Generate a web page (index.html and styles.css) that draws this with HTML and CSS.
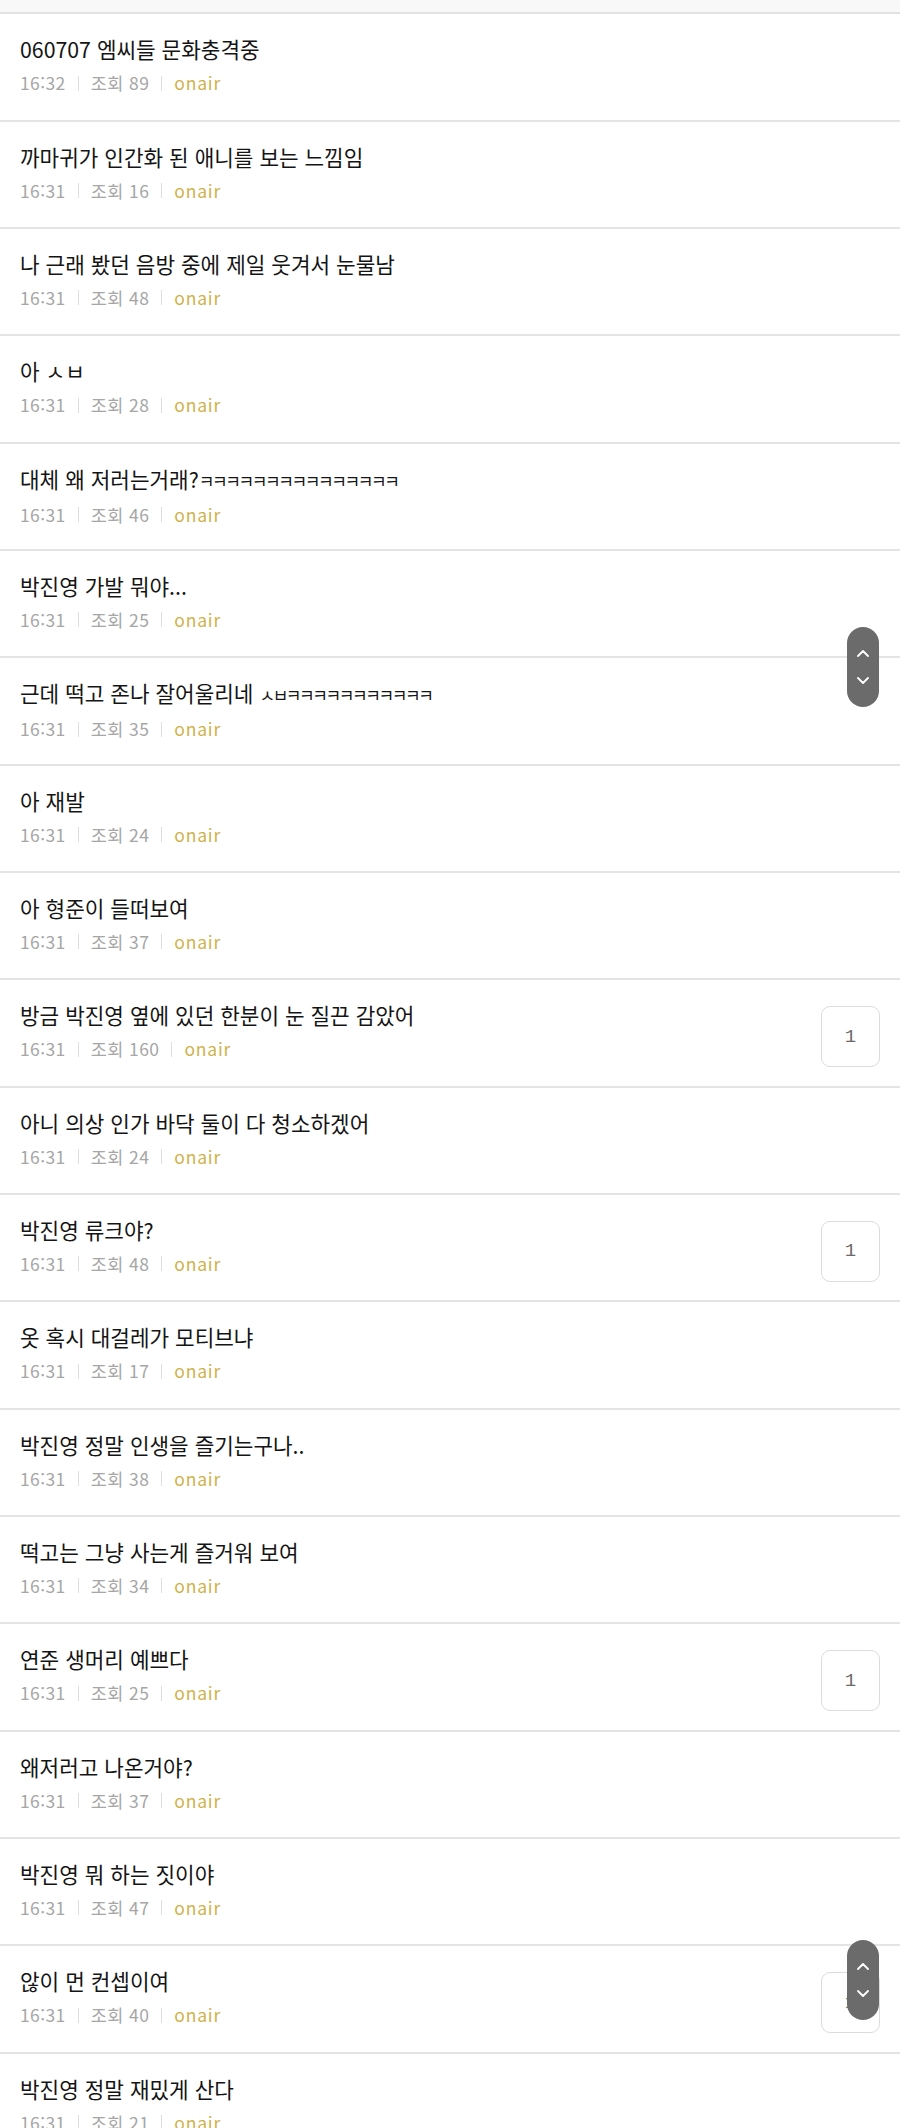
FILE: index.html
```html
<!DOCTYPE html>
<html lang="ko">
<head>
<meta charset="utf-8">
<title>onair</title>
<link rel="stylesheet" href="styles.css">
</head>
<body>
<div class="topbar"></div>
<ul class="list">
  <li class="row"><div class="main"><div class="title">060707 엠씨들 문화충격중</div><div class="meta"><span>16:32</span><span class="sep"></span><span>조회 89</span><span class="sep"></span><span class="board">onair</span></div></div></li>
  <li class="row"><div class="main"><div class="title">까마귀가 인간화 된 애니를 보는 느낌임</div><div class="meta"><span>16:31</span><span class="sep"></span><span>조회 16</span><span class="sep"></span><span class="board">onair</span></div></div></li>
  <li class="row"><div class="main"><div class="title">나 근래 봤던 음방 중에 제일 웃겨서 눈물남</div><div class="meta"><span>16:31</span><span class="sep"></span><span>조회 48</span><span class="sep"></span><span class="board">onair</span></div></div></li>
  <li class="row"><div class="main"><div class="title">아 ㅅㅂ</div><div class="meta"><span>16:31</span><span class="sep"></span><span>조회 28</span><span class="sep"></span><span class="board">onair</span></div></div></li>
  <li class="row"><div class="main"><div class="title">대체 왜 저러는거래?<span class="jamo">ㅋㅋㅋㅋㅋㅋㅋㅋㅋㅋㅋㅋㅋㅋㅋ</span></div><div class="meta"><span>16:31</span><span class="sep"></span><span>조회 46</span><span class="sep"></span><span class="board">onair</span></div></div></li>
  <li class="row"><div class="main"><div class="title">박진영 가발 뭐야...</div><div class="meta"><span>16:31</span><span class="sep"></span><span>조회 25</span><span class="sep"></span><span class="board">onair</span></div></div></li>
  <li class="row"><div class="main"><div class="title">근데 떡고 존나 잘어울리네 <span class="jamo">ㅅㅂㅋㅋㅋㅋㅋㅋㅋㅋㅋㅋㅋ</span></div><div class="meta"><span>16:31</span><span class="sep"></span><span>조회 35</span><span class="sep"></span><span class="board">onair</span></div></div></li>
  <li class="row"><div class="main"><div class="title">아 재발</div><div class="meta"><span>16:31</span><span class="sep"></span><span>조회 24</span><span class="sep"></span><span class="board">onair</span></div></div></li>
  <li class="row"><div class="main"><div class="title">아 형준이 들떠보여</div><div class="meta"><span>16:31</span><span class="sep"></span><span>조회 37</span><span class="sep"></span><span class="board">onair</span></div></div></li>
  <li class="row"><div class="main"><div class="title">방금 박진영 옆에 있던 한분이 눈 질끈 감았어</div><div class="meta"><span>16:31</span><span class="sep"></span><span>조회 160</span><span class="sep"></span><span class="board">onair</span></div></div><div class="count">1</div></li>
  <li class="row"><div class="main"><div class="title">아니 의상 인가 바닥 둘이 다 청소하겠어</div><div class="meta"><span>16:31</span><span class="sep"></span><span>조회 24</span><span class="sep"></span><span class="board">onair</span></div></div></li>
  <li class="row"><div class="main"><div class="title">박진영 류크야?</div><div class="meta"><span>16:31</span><span class="sep"></span><span>조회 48</span><span class="sep"></span><span class="board">onair</span></div></div><div class="count">1</div></li>
  <li class="row"><div class="main"><div class="title">옷 혹시 대걸레가 모티브냐</div><div class="meta"><span>16:31</span><span class="sep"></span><span>조회 17</span><span class="sep"></span><span class="board">onair</span></div></div></li>
  <li class="row"><div class="main"><div class="title">박진영 정말 인생을 즐기는구나..</div><div class="meta"><span>16:31</span><span class="sep"></span><span>조회 38</span><span class="sep"></span><span class="board">onair</span></div></div></li>
  <li class="row"><div class="main"><div class="title">떡고는 그냥 사는게 즐거워 보여</div><div class="meta"><span>16:31</span><span class="sep"></span><span>조회 34</span><span class="sep"></span><span class="board">onair</span></div></div></li>
  <li class="row"><div class="main"><div class="title">연준 생머리 예쁘다</div><div class="meta"><span>16:31</span><span class="sep"></span><span>조회 25</span><span class="sep"></span><span class="board">onair</span></div></div><div class="count">1</div></li>
  <li class="row"><div class="main"><div class="title">왜저러고 나온거야?</div><div class="meta"><span>16:31</span><span class="sep"></span><span>조회 37</span><span class="sep"></span><span class="board">onair</span></div></div></li>
  <li class="row"><div class="main"><div class="title">박진영 뭐 하는 짓이야</div><div class="meta"><span>16:31</span><span class="sep"></span><span>조회 47</span><span class="sep"></span><span class="board">onair</span></div></div></li>
  <li class="row"><div class="main"><div class="title">않이 먼 컨셉이여</div><div class="meta"><span>16:31</span><span class="sep"></span><span>조회 40</span><span class="sep"></span><span class="board">onair</span></div></div><div class="count">1</div></li>
  <li class="row"><div class="main"><div class="title">박진영 정말 재밌게 산다</div><div class="meta"><span>16:31</span><span class="sep"></span><span>조회 21</span><span class="sep"></span><span class="board">onair</span></div></div></li>
</ul>

<div class="scroller scroller-top">
  <svg class="chev" width="14" height="8" viewBox="0 0 14 8"><path d="M2 7 L7 2 L12 7" fill="none" stroke="#fff" stroke-width="1.8" stroke-linecap="round" stroke-linejoin="round"/></svg>
  <svg class="chev" width="14" height="8" viewBox="0 0 14 8"><path d="M2 1 L7 6 L12 1" fill="none" stroke="#fff" stroke-width="1.8" stroke-linecap="round" stroke-linejoin="round"/></svg>
</div>
<div class="scroller scroller-bottom">
  <svg class="chev" width="14" height="8" viewBox="0 0 14 8"><path d="M2 7 L7 2 L12 7" fill="none" stroke="#fff" stroke-width="1.8" stroke-linecap="round" stroke-linejoin="round"/></svg>
  <svg class="chev" width="14" height="8" viewBox="0 0 14 8"><path d="M2 1 L7 6 L12 1" fill="none" stroke="#fff" stroke-width="1.8" stroke-linecap="round" stroke-linejoin="round"/></svg>
</div>
</body>
</html>
```

FILE: styles.css
```css
* { box-sizing: border-box; }
html, body {
  margin: 0;
  padding: 0;
  background: #fff;
}
body {
  position: relative;
  font-family: "Noto Sans CJK KR", "Noto Sans", sans-serif;
  color: #111;
  overflow: hidden;
}
.topbar {
  height: 14.3px;
  background: #f8f8f8;
  border-bottom: 2px solid #e2e2e2;
}
.list {
  list-style: none;
  margin: 0;
  padding: 0;
}
.row {
  height: 107.33px;
  border-bottom: 2px solid #e4e4e4;
  display: flex;
  align-items: flex-start;
  padding: 0 20px;
}
.main {
  flex: 1;
  min-width: 0;
  padding-top: 20px;
}
.title {
  font-size: 21.3px;
  line-height: 30px;
  color: #141414;
  white-space: nowrap;
}
.jamo {
  font-size: 17px;
  letter-spacing: -2.4px;
}
.meta {
  margin-top: 8px;
  display: flex;
  align-items: center;
  font-size: 17.5px;
  letter-spacing: 0.4px;
  line-height: 22px;
  color: #a6a6a6;
}
.sep {
  width: 1px;
  height: 15px;
  background: #dedede;
  margin: 0 12px;
}
.board {
  color: #cfb24a;
  letter-spacing: 0.8px;
}
.count {
  margin-top: 26px;
  width: 59px;
  height: 61px;
  border: 1.5px solid #dcdcdc;
  border-radius: 9px;
  display: flex;
  align-items: center;
  justify-content: center;
  font-family: "Liberation Mono", "DejaVu Sans Mono", monospace;
  font-size: 19px;
  color: #6a6a6a;
  background: #fff;
}
.scroller {
  position: absolute;
  left: 847px;
  width: 32px;
  height: 80px;
  border-radius: 16px;
  background: #6b6b6b;
  display: flex;
  flex-direction: column;
  align-items: center;
  justify-content: center;
  gap: 20px;
}
.scroller-top { top: 627px; }
.scroller-bottom { top: 1940px; }
.chev { display: block; }
```
